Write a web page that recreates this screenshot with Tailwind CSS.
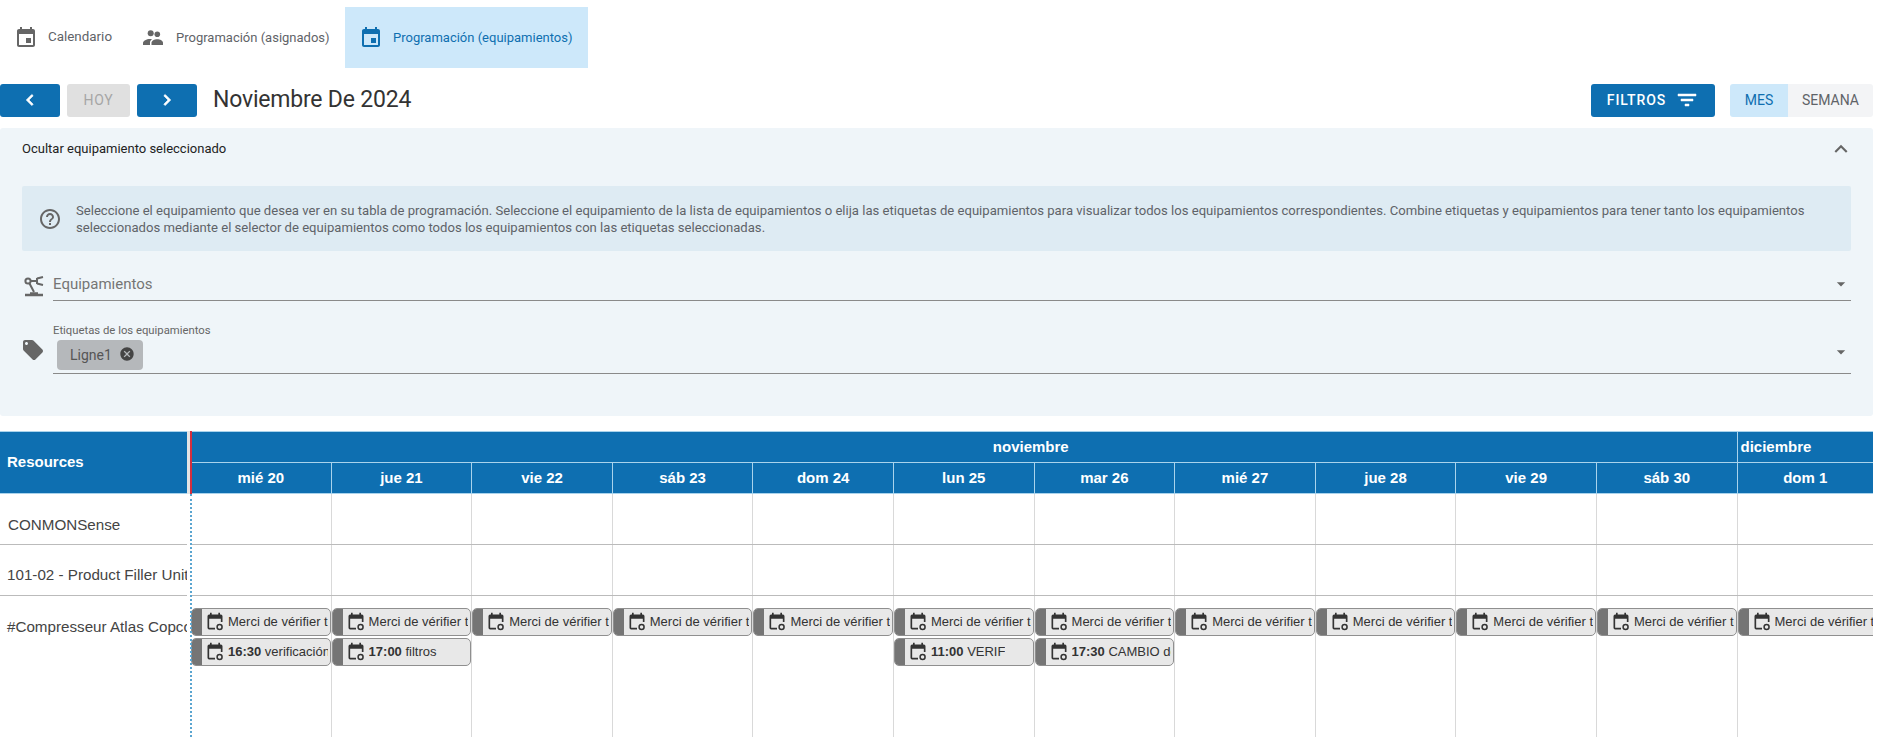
<!DOCTYPE html>
<html lang="es">
<head>
	<meta charset="UTF-8" />
	<title>Programación (equipamientos)</title>
	<script src="https://cdn.jsdelivr.net/npm/@tailwindcss/browser@4"></script>
</head>
<body class="bg-white h-[737px] overflow-hidden font-['Roboto',sans-serif]">
	<!-- Pestañas -->
	<div class="flex h-[61px] mt-[7px] text-[13px] items-stretch">
		<div class="flex items-center gap-[10px] pl-[14px] w-[131px] text-[13.4px] text-[#5f6368]">
			<svg class="w-[24px] h-[24px] fill-[#666]" viewBox="0 0 24 24"><path d="M17 12h-5v5h5v-5zM16 1v2H8V1H6v2H5c-1.11 0-1.99.9-1.99 2L3 19c0 1.1.89 2 2 2h14c1.1 0 2-.9 2-2V5c0-1.1-.9-2-2-2h-1V1h-2zm3 18H5V8h14v11z"/></svg>
			Calendario
		</div>
		<div class="flex items-center gap-[11px] pl-[10px] w-[214px] text-[#5f6368]">
			<svg class="w-[24px] h-[24px] fill-[#666]" viewBox="0 0 24 24"><circle cx="9.7" cy="7.3" r="3"/><circle cx="16.3" cy="8.3" r="2.8"/><path d="M2 19v-2c0-2.2 3.5-4 7-4 .7 0 1.4.1 2 .2-1.2.8-2 1.9-2 3.3V19z"/><path d="M10.5 19v-2.2c0-2 2.8-3.6 5.7-3.6s5.8 1.6 5.8 3.6V19z"/></svg>
			Programación (asignados)
		</div>
		<div class="flex items-center gap-[10px] pl-[14px] w-[243px] bg-[#cde8fa] text-[#0f6fb0]">
			<svg class="w-[24px] h-[24px] fill-[#0f6fb0]" viewBox="0 0 24 24"><path d="M17 12h-5v5h5v-5zM16 1v2H8V1H6v2H5c-1.11 0-1.99.9-1.99 2L3 19c0 1.1.89 2 2 2h14c1.1 0 2-.9 2-2V5c0-1.1-.9-2-2-2h-1V1h-2zm3 18H5V8h14v11z"/></svg>
			Programación (equipamientos)
		</div>
	</div>

	<!-- Barra de navegación -->
	<div class="flex items-center h-[34px] mt-[15px] w-[1873px]">
		<button class="flex items-center justify-center w-[60px] h-[33px] rounded-[3px] bg-[#0e6fb1]">
			<svg class="w-[22px] h-[22px] fill-white stroke-white stroke-[0.8]" viewBox="0 0 24 24"><path d="M15.41 7.41 14 6l-6 6 6 6 1.41-1.41L10.83 12z"/></svg>
		</button>
		<button class="ml-[7px] w-[63px] h-[33px] rounded-[3px] bg-[#e0e0e0] text-[#a6a6a6] text-[14px] tracking-[0.8px]">HOY</button>
		<button class="ml-[7px] flex items-center justify-center w-[60px] h-[33px] rounded-[3px] bg-[#0e6fb1]">
			<svg class="w-[22px] h-[22px] fill-white stroke-white stroke-[0.8]" viewBox="0 0 24 24"><path d="M10 6 8.59 7.41 13.17 12l-4.58 4.59L10 18l6-6z"/></svg>
		</button>
		<h1 class="ml-[16px] text-[23px] tracking-[-0.2px] text-[#333]">Noviembre De 2024</h1>
		<button class="ml-auto flex items-center justify-center gap-[9px] w-[124px] h-[33px] rounded-[3px] bg-[#0e6fb1] text-white text-[14px] font-medium tracking-[0.9px]">
			FILTROS
			<svg class="w-[24px] h-[24px] fill-white stroke-white stroke-[0.5]" viewBox="0 0 24 24"><path d="M10 18h4v-2h-4v2zM3 6v2h18V6H3zm3 7h12v-2H6v2z"/></svg>
		</button>
		<div class="ml-[15px] flex h-[33px] text-[14px]">
			<div class="flex items-center justify-center w-[58px] bg-[#cde8fa] text-[#0f6fb0] rounded-l-[3px]">MES</div>
			<div class="flex items-center justify-center w-[85px] bg-[#f3f4f6] text-[#5f6368] rounded-r-[3px]">SEMANA</div>
		</div>
	</div>

	<!-- Panel de selección de equipamiento -->
	<section class="mt-[11px] w-[1873px] h-[288px] bg-[#eff5f9] rounded-[3px] px-[22px]">
		<div class="flex items-center justify-between h-[42px] text-[13px] text-[#222]">
			Ocultar equipamiento seleccionado
			<svg class="w-[26px] h-[26px] fill-[#666] mr-[-3px]" viewBox="0 0 24 24"><path d="M12 8l-6 6 1.41 1.41L12 10.83l4.59 4.58L18 14z"/></svg>
		</div>
		<div class="flex items-center mt-[16px] h-[65px] bg-[#deebf3] rounded-[2px] pl-[16px] pr-[36px]">
			<svg class="w-[24px] h-[24px] fill-[#666] shrink-0" viewBox="0 0 24 24"><path d="M11 18h2v-2h-2v2zm1-16C6.48 2 2 6.48 2 12s4.48 10 10 10 10-4.48 10-10S17.52 2 12 2zm0 18c-4.41 0-8-3.59-8-8s3.59-8 8-8 8 3.59 8 8-3.59 8-8 8zm0-14c-2.21 0-4 1.79-4 4h2c0-1.1.9-2 2-2s2 .9 2 2c0 2-3 1.75-3 5h2c0-2.25 3-2.5 3-5 0-2.21-1.79-4-4-4z"/></svg>
			<p class="ml-[14px] text-[13.1px] leading-[17px] text-[#5f6368]">Seleccione el equipamiento que desea ver en su tabla de programación. Seleccione el equipamiento de la lista de equipamientos o elija las etiquetas de equipamientos para visualizar todos los equipamientos correspondientes. Combine etiquetas y equipamientos para tener tanto los equipamientos seleccionados mediante el selector de equipamientos como todos los equipamientos con las etiquetas seleccionadas.</p>
		</div>
		<div class="flex items-end mt-[19px] h-[31px]">
			<svg class="w-[24px] h-[24px] shrink-0 mb-[3px] mr-[7px]" viewBox="0 0 24 24" fill="none" stroke="#666" stroke-width="2"><circle cx="6" cy="7" r="2.6"/><path d="M7.5 9.5 12 18M8.5 7H15M15 4v6M15 4.5 21 3M15 9.5l6 1.5"/><path d="M3 21h18M8 19.5h8" stroke-width="2.4"/></svg>
			<div class="flex-1 flex items-center justify-between h-[31px] pb-[2px] border-b border-[#8a8a8a] text-[15px] text-[#757575]">
				Equipamientos
				<svg class="w-[20px] h-[20px] fill-[#666]" viewBox="0 0 24 24"><path d="M7 10l5 5 5-5z"/></svg>
			</div>
		</div>
		<div class="flex mt-[20px] h-[53px]">
			<svg class="w-[24px] h-[24px] fill-[#666] shrink-0 mt-[17px] ml-[-1px] mr-[8px]" viewBox="0 0 24 24"><path d="M21.41 11.58l-9-9C12.05 2.22 11.55 2 11 2H4c-1.1 0-2 .9-2 2v7c0 .55.22 1.05.59 1.42l9 9c.36.36.86.58 1.41.58.55 0 1.05-.22 1.41-.59l7-7c.37-.36.59-.86.59-1.41 0-.55-.23-1.06-.59-1.42zM5.5 7C4.67 7 4 6.33 4 5.5S4.67 4 5.5 4 7 4.67 7 5.5 6.33 7 5.5 7z"/></svg>
			<div class="flex-1 relative border-b border-[#8a8a8a] pt-[3px]">
				<div class="text-[11.3px] leading-[14px] text-[#666]">Etiquetas de los equipamientos</div>
				<div class="ml-[4px] mt-[2px] inline-flex items-center gap-[7px] w-[86px] h-[30px] pl-[13px] rounded-[4px] bg-[#b5b8bb] text-[14px] text-[#555]">
					Ligne1
					<svg class="w-[16px] h-[16px] fill-[#444] mb-[2px]" viewBox="0 0 24 24"><path d="M12 2C6.47 2 2 6.47 2 12s4.47 10 10 10 10-4.47 10-10S17.53 2 12 2zm5 13.59L15.59 17 12 13.41 8.41 17 7 15.59 10.59 12 7 8.41 8.41 7 12 10.59 15.59 7 17 8.41 13.41 12 17 15.59z"/></svg>
				</div>
				<svg class="absolute right-0 top-[21px] w-[20px] h-[20px] fill-[#666]" viewBox="0 0 24 24"><path d="M7 10l5 5 5-5z"/></svg>
			</div>
		</div>
	</section>

	<!-- Tabla de programación -->
	<div class="mt-[15px] flex w-[1873px] h-[306px] overflow-hidden font-['Liberation_Sans',sans-serif] text-[15px]">
		<div class="w-[187px] shrink-0 text-[15.2px] text-[#444]">
			<div class="flex items-center h-[63px] pl-[7px] bg-[#0e6fb1] border-y border-[#a9d3ec] text-white text-[15px] font-bold">Resources</div>
			<div class="flex items-center h-[51px] pl-[8px] pt-[13px] border-b border-[#bbb] whitespace-nowrap">CONMONSense</div>
			<div class="flex items-center h-[51px] pl-[7px] pt-[10px] border-b border-[#bbb] whitespace-nowrap overflow-hidden">101-02 - Product Filler Unit</div>
			<div class="pl-[7px] pt-[20px] whitespace-nowrap overflow-hidden">#Compresseur Atlas Copco</div>
		</div>
		<div class="relative flex-1 ml-[3px] pl-[1px] min-w-0">
			<div class="absolute left-[-3px] top-0 w-[3px] h-[63px] bg-[#e4e4e4]"></div>
			<div class="absolute left-0 top-0 w-[2px] h-[63px] bg-[#d32f3f]"></div>
			<div class="absolute left-0 top-[63px] bottom-0 border-l-2 border-dotted border-[#5aa5d0]"></div>
			<div class="grid grid-cols-[repeat(11,140.6px)_1fr] h-[31px] bg-[#0e6fb1] border-t border-[#a9d3ec] text-white font-bold">
				<div class="col-span-11 flex items-center justify-center pl-[134px] border-r border-[#a9d3ec]">noviembre</div>
				<div class="flex items-center pl-[3px]">diciembre</div>
			</div>
			<div id="cabecera" class="grid grid-cols-[repeat(11,140.6px)_1fr] h-[32px] bg-[#0e6fb1] border-y border-[#a9d3ec] text-white font-bold"></div>
			<div id="fila1" class="grid grid-cols-[repeat(11,140.6px)_1fr] h-[51px] border-b border-[#bbb]"></div>
			<div id="fila2" class="grid grid-cols-[repeat(11,140.6px)_1fr] h-[51px] border-b border-[#bbb]"></div>
			<div id="fila3" class="grid grid-cols-[repeat(11,140.6px)_1fr] h-[142px] text-[13px] text-[#333]"></div>
		</div>
	</div>

	<script>
		const dias = ["mié 20","jue 21","vie 22","sáb 23","dom 24","lun 25","mar 26","mié 27","jue 28","vie 29","sáb 30","dom 1"];
		// segunda línea de eventos por columna
		const segundos = { 0: ["16:30", "verificación"], 1: ["17:00", "filtros"], 5: ["11:00", "VERIF"], 6: ["17:30", "CAMBIO de"] };
		const icono = '<svg class="w-[20px] h-[20px] shrink-0 fill-[#333]" viewBox="0 0 24 24"><path d="M6 1h2v2h8V1h2v2h1a2 2 0 0 1 2 2v7h-2V8H5v11h7v2H5a2 2 0 0 1-2-2V5a2 2 0 0 1 2-2h1z"/><circle cx="17.5" cy="18" r="3" fill="none" stroke="#333" stroke-width="1.8"/></svg>';

		function evento(html, clase) {
			return `<div class="flex h-[28px] ${clase} rounded-[5px] overflow-hidden border border-[#8f8f8f] bg-[#e8e8e8]">
				<div class="w-[10px] shrink-0 bg-[#757575]"></div>
				<div class="flex items-center flex-1 min-w-0 pl-[3px] pr-[2px] gap-[3px]">${icono}<span class="overflow-hidden whitespace-nowrap">${html}</span></div>
			</div>`;
		}

		dias.forEach((d, i) => {
			const borde = i < 11 ? "border-r border-[#a9d3ec]" : "";
			document.getElementById("cabecera").insertAdjacentHTML("beforeend", `<div class="flex items-center justify-center ${borde}">${d}</div>`);
			const gris = i < 11 ? "border-r border-[#d9d9d9]" : "";
			document.getElementById("fila1").insertAdjacentHTML("beforeend", `<div class="${gris}"></div>`);
			document.getElementById("fila2").insertAdjacentHTML("beforeend", `<div class="${gris}"></div>`);
			// el último evento sigue más allá del borde derecho
			const ancho = i === 11 ? "w-[150px]" : "";
			let html = evento("Merci de vérifier tous les points", `mt-[12px] ${ancho}`);
			if (segundos[i]) html += evento(`<b>${segundos[i][0]}</b> ${segundos[i][1]}`, "mt-[2px]");
			document.getElementById("fila3").insertAdjacentHTML("beforeend", `<div class="min-w-0 ${gris}">${html}</div>`);
		});
	</script>
</body>
</html>
